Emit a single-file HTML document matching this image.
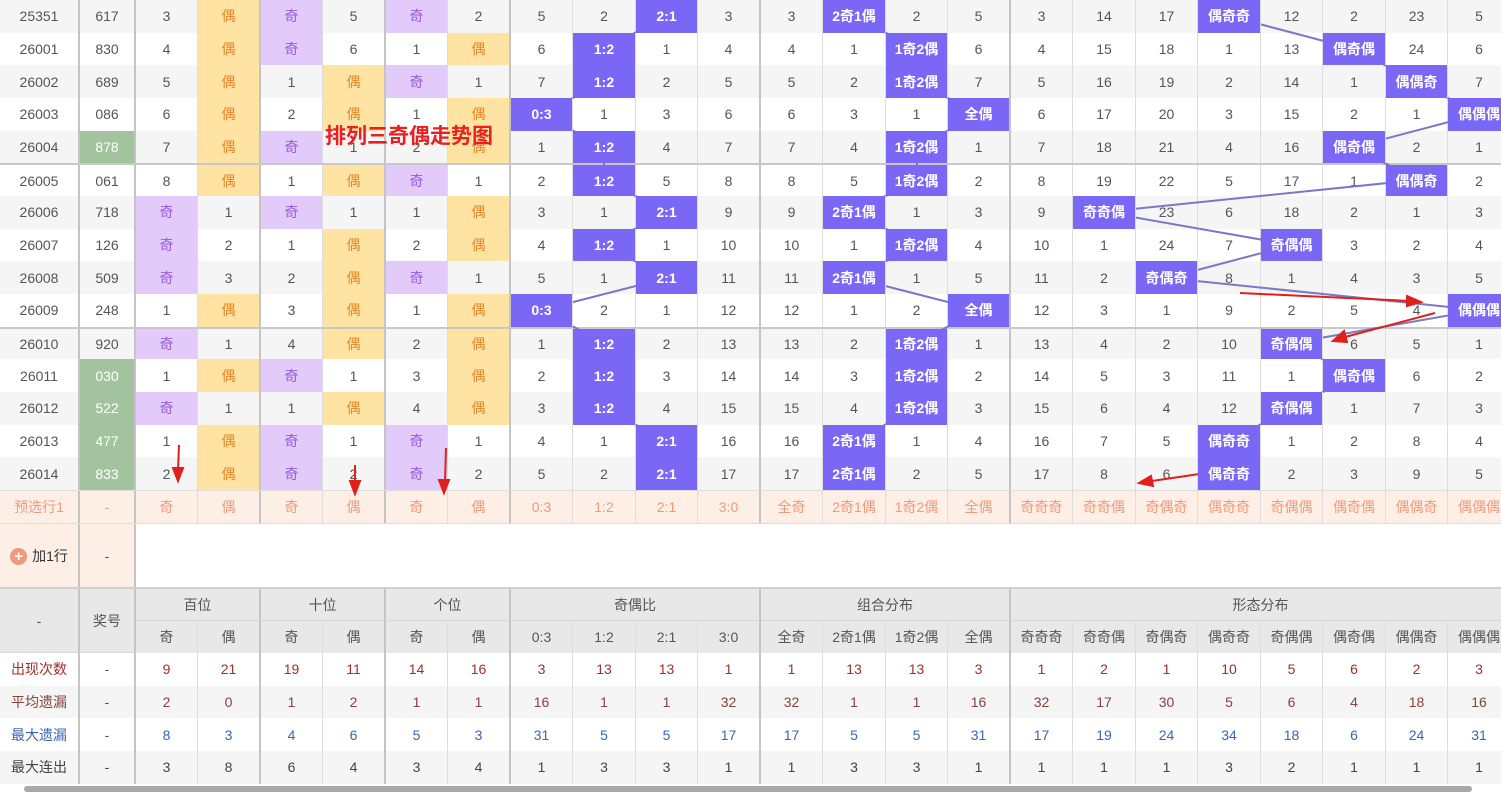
<!DOCTYPE html>
<html><head><meta charset="utf-8"><style>
*{box-sizing:border-box;margin:0;padding:0}
body{width:1501px;height:790px;overflow:hidden;background:#fff;font-family:"Liberation Sans","Noto Sans CJK SC",sans-serif;font-size:14px;color:#555;position:relative}
.r{display:flex;height:32.67px;width:1510px}
.r>div{flex:none;height:100%;display:flex;align-items:center;justify-content:center;border-right:1px solid #ddd;white-space:nowrap;overflow:hidden}
.r>div:nth-child(1){width:80px;border-right:2px solid #c4c4c4}
.r>div:nth-child(2){width:56px;border-right:2px solid #c4c4c4}
.r>div:nth-child(odd){width:62px}.r>div:nth-child(even){width:63px}
.r>div:nth-child(1){width:80px}.r>div:nth-child(2){width:56px}
.r>div:nth-child(4),.r>div:nth-child(6),.r>div:nth-child(8),.r>div:nth-child(12),.r>div:nth-child(16){border-right:2px solid #c4c4c4}
.g{background:#f5f5f5}
.sep{border-top:2px solid #c8c8c8}
.o{background:#e2cafb;color:#9a5ad8}
.e{background:#ffe3a2;color:#e8862a}
.h{background:#7a67f6;color:#fff;font-weight:bold;position:relative;z-index:2}
.gr{background:#a3c39f;color:#fff}
.p>div{background:#fdeee6;color:#ef9b7b}
.p{border-top:1px solid #ddd;height:33px}
.sh>div{background:#e8e8e8}
.sh>div:nth-child(1),.sh>div:nth-child(2){background:transparent;border-right-color:transparent}
svg{position:absolute;left:0;top:0;z-index:1}
.hd{position:absolute;background:#e8e8e8;display:flex;align-items:center;justify-content:center;border-right:1px solid #d8d8d8;border-bottom:1px solid #d8d8d8;color:#555;z-index:3}
.t{position:absolute;left:325px;top:120px;color:#e8201f;font-weight:bold;font-size:21px;z-index:5;font-family:"Liberation Sans","Noto Sans CJK SC",sans-serif}
</style></head><body>
<div class="r g"><div>25351</div><div>617</div><div>3</div><div class="e">偶</div><div class="o">奇</div><div>5</div><div class="o">奇</div><div>2</div><div>5</div><div>2</div><div class="h">2:1</div><div>3</div><div>3</div><div class="h">2奇1偶</div><div>2</div><div>5</div><div>3</div><div>14</div><div>17</div><div class="h">偶奇奇</div><div>12</div><div>2</div><div>23</div><div>5</div></div>
<div class="r"><div>26001</div><div>830</div><div>4</div><div class="e">偶</div><div class="o">奇</div><div>6</div><div>1</div><div class="e">偶</div><div>6</div><div class="h">1:2</div><div>1</div><div>4</div><div>4</div><div>1</div><div class="h">1奇2偶</div><div>6</div><div>4</div><div>15</div><div>18</div><div>1</div><div>13</div><div class="h">偶奇偶</div><div>24</div><div>6</div></div>
<div class="r g"><div>26002</div><div>689</div><div>5</div><div class="e">偶</div><div>1</div><div class="e">偶</div><div class="o">奇</div><div>1</div><div>7</div><div class="h">1:2</div><div>2</div><div>5</div><div>5</div><div>2</div><div class="h">1奇2偶</div><div>7</div><div>5</div><div>16</div><div>19</div><div>2</div><div>14</div><div>1</div><div class="h">偶偶奇</div><div>7</div></div>
<div class="r"><div>26003</div><div>086</div><div>6</div><div class="e">偶</div><div>2</div><div class="e">偶</div><div>1</div><div class="e">偶</div><div class="h">0:3</div><div>1</div><div>3</div><div>6</div><div>6</div><div>3</div><div>1</div><div class="h">全偶</div><div>6</div><div>17</div><div>20</div><div>3</div><div>15</div><div>2</div><div>1</div><div class="h">偶偶偶</div></div>
<div class="r g"><div>26004</div><div class="gr">878</div><div>7</div><div class="e">偶</div><div class="o">奇</div><div>1</div><div>2</div><div class="e">偶</div><div>1</div><div class="h">1:2</div><div>4</div><div>7</div><div>7</div><div>4</div><div class="h">1奇2偶</div><div>1</div><div>7</div><div>18</div><div>21</div><div>4</div><div>16</div><div class="h">偶奇偶</div><div>2</div><div>1</div></div>
<div class="r sep"><div>26005</div><div>061</div><div>8</div><div class="e">偶</div><div>1</div><div class="e">偶</div><div class="o">奇</div><div>1</div><div>2</div><div class="h">1:2</div><div>5</div><div>8</div><div>8</div><div>5</div><div class="h">1奇2偶</div><div>2</div><div>8</div><div>19</div><div>22</div><div>5</div><div>17</div><div>1</div><div class="h">偶偶奇</div><div>2</div></div>
<div class="r g"><div>26006</div><div>718</div><div class="o">奇</div><div>1</div><div class="o">奇</div><div>1</div><div>1</div><div class="e">偶</div><div>3</div><div>1</div><div class="h">2:1</div><div>9</div><div>9</div><div class="h">2奇1偶</div><div>1</div><div>3</div><div>9</div><div class="h">奇奇偶</div><div>23</div><div>6</div><div>18</div><div>2</div><div>1</div><div>3</div></div>
<div class="r"><div>26007</div><div>126</div><div class="o">奇</div><div>2</div><div>1</div><div class="e">偶</div><div>2</div><div class="e">偶</div><div>4</div><div class="h">1:2</div><div>1</div><div>10</div><div>10</div><div>1</div><div class="h">1奇2偶</div><div>4</div><div>10</div><div>1</div><div>24</div><div>7</div><div class="h">奇偶偶</div><div>3</div><div>2</div><div>4</div></div>
<div class="r g"><div>26008</div><div>509</div><div class="o">奇</div><div>3</div><div>2</div><div class="e">偶</div><div class="o">奇</div><div>1</div><div>5</div><div>1</div><div class="h">2:1</div><div>11</div><div>11</div><div class="h">2奇1偶</div><div>1</div><div>5</div><div>11</div><div>2</div><div class="h">奇偶奇</div><div>8</div><div>1</div><div>4</div><div>3</div><div>5</div></div>
<div class="r"><div>26009</div><div>248</div><div>1</div><div class="e">偶</div><div>3</div><div class="e">偶</div><div>1</div><div class="e">偶</div><div class="h">0:3</div><div>2</div><div>1</div><div>12</div><div>12</div><div>1</div><div>2</div><div class="h">全偶</div><div>12</div><div>3</div><div>1</div><div>9</div><div>2</div><div>5</div><div>4</div><div class="h">偶偶偶</div></div>
<div class="r g sep"><div>26010</div><div>920</div><div class="o">奇</div><div>1</div><div>4</div><div class="e">偶</div><div>2</div><div class="e">偶</div><div>1</div><div class="h">1:2</div><div>2</div><div>13</div><div>13</div><div>2</div><div class="h">1奇2偶</div><div>1</div><div>13</div><div>4</div><div>2</div><div>10</div><div class="h">奇偶偶</div><div>6</div><div>5</div><div>1</div></div>
<div class="r"><div>26011</div><div class="gr">030</div><div>1</div><div class="e">偶</div><div class="o">奇</div><div>1</div><div>3</div><div class="e">偶</div><div>2</div><div class="h">1:2</div><div>3</div><div>14</div><div>14</div><div>3</div><div class="h">1奇2偶</div><div>2</div><div>14</div><div>5</div><div>3</div><div>11</div><div>1</div><div class="h">偶奇偶</div><div>6</div><div>2</div></div>
<div class="r g"><div>26012</div><div class="gr">522</div><div class="o">奇</div><div>1</div><div>1</div><div class="e">偶</div><div>4</div><div class="e">偶</div><div>3</div><div class="h">1:2</div><div>4</div><div>15</div><div>15</div><div>4</div><div class="h">1奇2偶</div><div>3</div><div>15</div><div>6</div><div>4</div><div>12</div><div class="h">奇偶偶</div><div>1</div><div>7</div><div>3</div></div>
<div class="r"><div>26013</div><div class="gr">477</div><div>1</div><div class="e">偶</div><div class="o">奇</div><div>1</div><div class="o">奇</div><div>1</div><div>4</div><div>1</div><div class="h">2:1</div><div>16</div><div>16</div><div class="h">2奇1偶</div><div>1</div><div>4</div><div>16</div><div>7</div><div>5</div><div class="h">偶奇奇</div><div>1</div><div>2</div><div>8</div><div>4</div></div>
<div class="r g"><div>26014</div><div class="gr">833</div><div>2</div><div class="e">偶</div><div class="o">奇</div><div>2</div><div class="o">奇</div><div>2</div><div>5</div><div>2</div><div class="h">2:1</div><div>17</div><div>17</div><div class="h">2奇1偶</div><div>2</div><div>5</div><div>17</div><div>8</div><div>6</div><div class="h">偶奇奇</div><div>2</div><div>3</div><div>9</div><div>5</div></div>
<div class="r p"><div>预选行1</div><div>-</div><div>奇</div><div>偶</div><div>奇</div><div>偶</div><div>奇</div><div>偶</div><div>0:3</div><div>1:2</div><div>2:1</div><div>3:0</div><div>全奇</div><div>2奇1偶</div><div>1奇2偶</div><div>全偶</div><div>奇奇奇</div><div>奇奇偶</div><div>奇偶奇</div><div>偶奇奇</div><div>奇偶偶</div><div>偶奇偶</div><div>偶偶奇</div><div>偶偶偶</div></div>
<div style="position:absolute;left:0;top:523px;width:1501px;height:65px;border-top:1px solid #ddd">
 <div style="position:absolute;left:0;top:0;width:80px;height:64px;background:#fdeee6;border-right:2px solid #c4c4c4;display:flex;align-items:center;justify-content:center;color:#333"><span style="display:inline-block;width:17px;height:17px;border-radius:50%;background:#ef9b7b;color:#fff;font-size:15px;line-height:17px;text-align:center;font-weight:bold;margin-right:5px">+</span>加1行</div>
 <div style="position:absolute;left:80px;top:0;width:56px;height:64px;background:#fdeee6;border-right:2px solid #c4c4c4;display:flex;align-items:center;justify-content:center">-</div>
</div>
<div style="position:absolute;left:0;top:587px;width:1501px;border-top:2px solid #d0d0d0"></div>
<div class="hd" style="left:0;top:589px;width:80px;height:64px;border-right:2px solid #c4c4c4">-</div>
<div class="hd" style="left:80px;top:589px;width:56px;height:64px;border-right:2px solid #c4c4c4">奖号</div>
<div class="hd" style="left:136px;top:589px;width:125px;height:32px;border-right:2px solid #c4c4c4">百位</div>
<div class="hd" style="left:261px;top:589px;width:125px;height:32px;border-right:2px solid #c4c4c4">十位</div>
<div class="hd" style="left:386px;top:589px;width:125px;height:32px;border-right:2px solid #c4c4c4">个位</div>
<div class="hd" style="left:511px;top:589px;width:250px;height:32px;border-right:2px solid #c4c4c4">奇偶比</div>
<div class="hd" style="left:761px;top:589px;width:250px;height:32px;border-right:2px solid #c4c4c4">组合分布</div>
<div class="hd" style="left:1011px;top:589px;width:500px;height:32px">形态分布</div>
<div style="position:absolute;left:0;top:621px">
<div class="r sh" style="height:32px"><div></div><div></div><div>奇</div><div>偶</div><div>奇</div><div>偶</div><div>奇</div><div>偶</div><div>0:3</div><div>1:2</div><div>2:1</div><div>3:0</div><div>全奇</div><div>2奇1偶</div><div>1奇2偶</div><div>全偶</div><div>奇奇奇</div><div>奇奇偶</div><div>奇偶奇</div><div>偶奇奇</div><div>奇偶偶</div><div>偶奇偶</div><div>偶偶奇</div><div>偶偶偶</div></div>
<div class="r" style="color:#a0302a"><div>出现次数</div><div style="color:#555">-</div><div>9</div><div>21</div><div>19</div><div>11</div><div>14</div><div>16</div><div>3</div><div>13</div><div>13</div><div>1</div><div>1</div><div>13</div><div>13</div><div>3</div><div>1</div><div>2</div><div>1</div><div>10</div><div>5</div><div>6</div><div>2</div><div>3</div></div>
<div class="r g" style="color:#84443a"><div>平均遗漏</div><div style="color:#555">-</div><div>2</div><div>0</div><div>1</div><div>2</div><div>1</div><div>1</div><div>16</div><div>1</div><div>1</div><div>32</div><div>32</div><div>1</div><div>1</div><div>16</div><div>32</div><div>17</div><div>30</div><div>5</div><div>6</div><div>4</div><div>18</div><div>16</div></div>
<div class="r" style="color:#3a66b4"><div>最大遗漏</div><div style="color:#555">-</div><div>8</div><div>3</div><div>4</div><div>6</div><div>5</div><div>3</div><div>31</div><div>5</div><div>5</div><div>17</div><div>17</div><div>5</div><div>5</div><div>31</div><div>17</div><div>19</div><div>24</div><div>34</div><div>18</div><div>6</div><div>24</div><div>31</div></div>
<div class="r g" style="color:#444"><div>最大连出</div><div>-</div><div>3</div><div>8</div><div>6</div><div>4</div><div>3</div><div>4</div><div>1</div><div>3</div><div>3</div><div>1</div><div>1</div><div>3</div><div>3</div><div>1</div><div>1</div><div>1</div><div>1</div><div>3</div><div>2</div><div>1</div><div>1</div><div>1</div></div>
</div>
<div style="position:absolute;left:24px;top:786px;width:1448px;height:6px;border-radius:3px;background:#a8a8a8"></div>
<svg width="1501" height="790">
<g stroke="#7a78c8" stroke-width="2" fill="none">
<polyline points="667,16 604,49 604,82 542,114 604,147 604,180 667,212 604,245 667,278 542,310 604,343 604,376 604,408 667,441 667,474"/>
<polyline points="854,16 917,49 917,82 979,114 917,147 917,180 854,212 917,245 854,278 979,310 917,343 917,376 917,408 854,441 854,474"/>
<polyline points="1229,16 1354,49 1417,82 1479,114 1354,147 1417,180 1104,212 1292,245 1167,278 1479,310 1292,343 1354,376 1292,408 1229,441 1229,474"/>
</g>
<g stroke="#e0201a" stroke-width="2" fill="#e0201a">
<line x1="1240" y1="293" x2="1410" y2="301"/><polygon points="1421,302 1407,296 1407,306"/>
<line x1="1435" y1="313" x2="1345" y2="337"/><polygon points="1333,341 1344,331 1347,342"/>
<line x1="1240" y1="468" x2="1152" y2="481"/><polygon points="1139,483 1151,476 1153,486"/>
<line x1="179" y1="445" x2="178" y2="470"/><polygon points="178,481 173,468 183,468"/>
<line x1="355" y1="465" x2="355" y2="483"/><polygon points="355,494 350,481 360,481"/>
<line x1="446" y1="448" x2="445" y2="482"/><polygon points="444,493 439,480 449,480"/>
</g>
</svg>
<div class="t">排列三奇偶走势图</div>
</body></html>
